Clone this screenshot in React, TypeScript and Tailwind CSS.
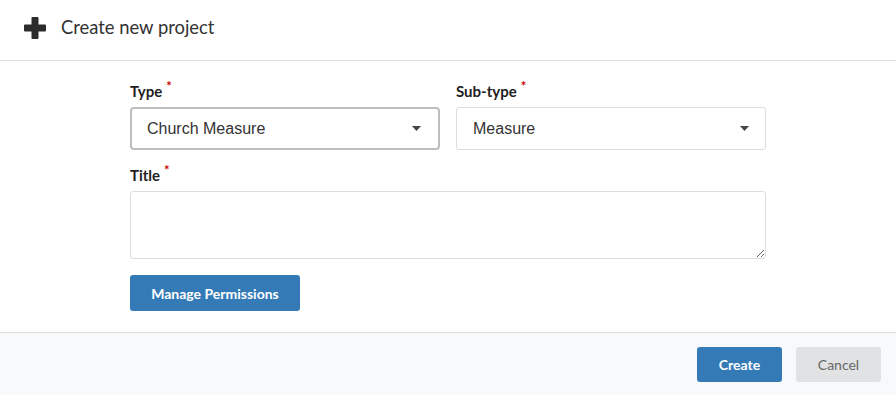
const lato = { fontFamily: 'Lato, "Open Sans", sans-serif' };
const arial = { fontFamily: '"Liberation Sans", Arial, sans-serif' };

function Caret() {
  return (
    <svg width="9" height="5" viewBox="0 0 9 5" className="text-[#444]">
      <path d="M0 0h9L4.5 5z" fill="currentColor" />
    </svg>
  );
}

function Label({ text }: { text: string }) {
  return (
    <label className="flex items-start text-[15px] font-bold leading-none text-[#222]" style={lato}>
      {text}
      <span className="ml-[4px] -mt-[4px] text-[13px] text-[#c00]">*</span>
    </label>
  );
}

export default function App() {
  return (
    <div className="flex h-[395px] w-[896px] flex-col bg-white" style={lato}>
      <header className="flex h-[61px] shrink-0 items-center gap-[15px] border-b border-[#dddddd] pb-[4px] pl-[24px]">
        <svg width="22" height="22" viewBox="0 0 22 22" className="text-[#2b2b2b]">
          <rect x="7.5" y="0" width="7" height="22" rx="1" fill="currentColor" />
          <rect x="0" y="7.5" width="22" height="7" rx="1" fill="currentColor" />
        </svg>
        <h1 className="text-[18.4px] font-normal text-[#333]">Create new project</h1>
      </header>

      <main className="flex flex-1 justify-center">
        <div className="mt-[23px] flex w-[636px] flex-col">
          <div className="grid grid-cols-2 gap-[16px]">
            <div className="flex flex-col gap-[8px]">
              <Label text="Type" />
              <div
                className="flex h-[43px] items-center justify-between rounded-[4px] border-2 border-[#bdbdbd] pl-[15px] pr-[17px] text-[16px] text-[#333]"
                style={arial}
              >
                <span>Church Measure</span>
                <Caret />
              </div>
            </div>
            <div className="flex flex-col gap-[8px]">
              <Label text="Sub-type" />
              <div
                className="flex h-[43px] items-center justify-between rounded-[3px] border border-[#dddddd] pl-[16px] pr-[16px] text-[16px] text-[#333]"
                style={arial}
              >
                <span>Measure</span>
                <Caret />
              </div>
            </div>
          </div>

          <div className="mt-[18px] flex flex-col gap-[8px]">
            <Label text="Title" />
            <textarea className="h-[68px] w-full resize-y rounded-[3px] border border-[#dddddd] outline-none" />
          </div>

          <div className="mt-[16px]">
            <button className="h-[36px] w-[170px] rounded-[3px] bg-[#337ab7] text-[14px] font-bold text-white">
              Manage Permissions
            </button>
          </div>
        </div>
      </main>

      <footer className="flex h-[63px] shrink-0 items-center justify-end gap-[14px] border-t border-[#dddddd] bg-[#f8f9fb] pr-[15px]">
        <button className="h-[35px] w-[85px] rounded-[3px] bg-[#337ab7] text-[14px] font-bold text-white">Create</button>
        <button className="h-[35px] w-[85px] rounded-[3px] bg-[#e1e2e3] text-[14px] text-[#666]">Cancel</button>
      </footer>
    </div>
  );
}
